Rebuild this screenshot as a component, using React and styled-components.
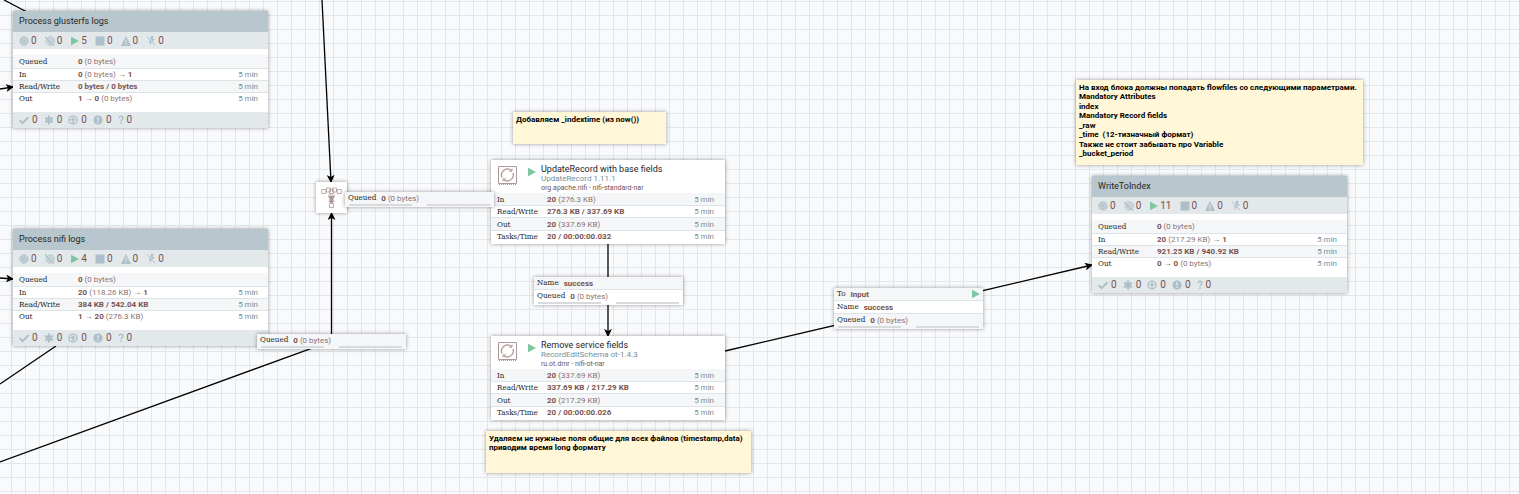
import React from 'react';
import styled, { createGlobalStyle } from 'styled-components';

const Global = createGlobalStyle`
  * { box-sizing: border-box; }
  html, body, #root { height: 100%; }
  body { margin: 0; font-family: Roboto, sans-serif; }
`;

const Canvas = styled.main`
  position: relative;
  min-height: 100%;
  overflow: hidden;
  background-color: #f9fafc;
  background-image:
    linear-gradient(to right, #e3e7e9 1px, transparent 1px),
    linear-gradient(to bottom, #e3e7e9 1px, transparent 1px);
  background-size: 14px 14px;
  background-position: 11px 1px;
`;

const Wires = styled.svg`
  position: absolute;
  inset: 0;
  width: 100%;
  height: 100%;
`;

const Node = styled.section`
  position: absolute;
  left: ${(p) => p.$x}px;
  top: ${(p) => p.$y}px;
  width: ${(p) => p.$w}px;
  background: #fff;
  box-shadow: 0 0 4px rgba(0, 0, 0, 0.4);
`;

const GroupTitle = styled.h2`
  margin: 0;
  padding: 0 6px;
  background: #b8c6cd;
  color: #262626;
  font-size: 9px;
  font-weight: 400;
  line-height: 21px;
`;

const Counters = styled.div`
  display: flex;
  align-items: center;
  gap: ${(p) => (p.$footer ? 6 : 8)}px;
  height: ${(p) => (p.$footer ? 16 : 17)}px;
  padding: 0 6px;
  background: #e3e8eb;
`;

const Counter = styled.span`
  display: flex;
  align-items: center;
  gap: ${(p) => (p.$footer ? 3 : 2)}px;
  color: #775351;
  font-size: 10px;
  line-height: 16px;
`;

const Stats = styled.table`
  width: 100%;
  border-collapse: collapse;
  table-layout: fixed;
  margin: ${(p) => (p.$group ? '6px 0 7px' : '0 0 1px')};
`;

const StatRow = styled.tr`
  height: 12px;
  background: ${(p) => (p.$shade ? '#f4f6f7' : '#fff')};
  box-shadow: inset 0 -1px #dde4e8;
  &:first-child { height: ${(p) => (p.$group ? 14 : 13)}px; }
  &:nth-child(3) { height: ${(p) => (p.$group ? 12 : 13)}px; }
  &:last-child { box-shadow: none; }
`;

const Label = styled.th`
  width: ${(p) => p.$w}px;
  padding: 0 0 0 6px;
  color: #262626;
  font: 400 8px/12px "DejaVu Serif Condensed", "DejaVu Serif", serif;
  text-align: left;
  white-space: nowrap;
`;

const Value = styled.td`
  padding: 0;
  color: #775351;
  font-size: 8px;
  line-height: 12px;
  white-space: nowrap;
`;

const Muted = styled.span`
  color: #8f716f;
`;

const Period = styled.td`
  width: 40px;
  padding: 0 ${(p) => (p.$group ? 10 : 11)}px 0 0;
  color: #728e9b;
  font-size: 8px;
  line-height: 12px;
  text-align: right;
`;

const Head = styled.header`
  display: flex;
  height: 33px;
  padding: 5px 7px 0;
`;

const RunIcon = styled.svg`
  width: 10px;
  height: 10px;
  margin: 2px 4px 0 10px;
`;

const Titles = styled.div`
  display: flex;
  flex-direction: column;
  white-space: nowrap;
`;

const Name = styled.h2`
  margin: 0;
  color: #262626;
  font-size: 9px;
  font-weight: 400;
  line-height: 9px;
`;

const Type = styled.span`
  color: #728e9b;
  font-size: 8px;
  line-height: 10px;
`;

const Bundle = styled.span`
  color: #775351;
  font-size: 7px;
  line-height: 9px;
`;

const LinkRow = styled.div`
  display: flex;
  align-items: center;
  gap: 5px;
  height: ${(p) => (p.$last ? 12 : 13)}px;
  padding: 0 3px;
  background: ${(p) => (p.$shade ? '#f4f6f7' : '#fff')};
  border-bottom: ${(p) => (p.$last ? 0 : 1)}px solid #dde4e8;
  color: #775351;
  font-size: 8px;
  white-space: nowrap;
  svg { margin-left: auto; }
`;

const LinkLabel = styled.span`
  color: #262626;
  font: 400 8px/12px "DejaVu Serif Condensed", "DejaVu Serif", serif;
`;

const Gauges = styled.div`
  display: grid;
  grid-template-columns: 1fr 1fr;
  gap: 15px;
  padding: 0 4px 1px;
  background: ${(p) => (p.$shade ? '#f4f6f7' : '#fff')};
`;

const Gauge = styled.span`
  height: 2px;
  background: #d8dadb;
`;

const Funnel = styled(Node)`
  display: grid;
  place-items: center;
  height: 31px;
`;

const Note = styled.div`
  position: absolute;
  left: ${(p) => p.$x}px;
  top: ${(p) => p.$y}px;
  width: ${(p) => p.$w}px;
  min-height: ${(p) => p.$h}px;
  padding: 3px;
  background: #fff7d7;
  box-shadow: 0 0 4px rgba(0, 0, 0, 0.4);
`;

const NoteLine = styled.p`
  margin: 0;
  color: #000;
  font-size: 8px;
  font-weight: 700;
  line-height: 9px;
  white-space: pre;
  &:nth-child(even) { line-height: 10px; }
`;

const C = '#adbfc8';

const ICONS = {
  transmitting: (
    <g fill="none" stroke={C}>
      <circle cx="5" cy="5" r="4.200" fill="#ccd7dc" strokeWidth=".9" />
      <circle cx="5" cy="5" r="2.600" strokeWidth=".8" />
      <circle cx="5" cy="5" r="1.300" fill={C} stroke="none" />
    </g>
  ),
  notTransmitting: (
    <g fill="none" stroke={C}>
      <circle cx="5.300" cy="5" r="4.200" fill="#d3dce0" strokeWidth=".8" />
      <circle cx="5.300" cy="5" r="2.300" strokeWidth=".8" />
      <path d="M1.100.2l8.700 8.700" stroke="#e3e8eb" />
      <path d="M.4.7l8.800 8.800" strokeWidth="1.200" />
    </g>
  ),
  running: <path d="M1 .8l8 4.200-8 4.200z" fill="#7dc7a0" />,
  stopped: <path d="M.5.5h9v9h-9z" fill={C} />,
  invalid: <path fillRule="evenodd" d="M5 0l5 10H0zM4.300 3.500l.2 3.200h1l.2-3.200zM4.400 7.400v1.300h1.200V7.400z" fill={C} />,
  disabled: (
    <g fill="none" stroke={C}>
      <path d="M.8.5l8.400 8.700" />
      <path d="M5.200 0h2.600L6.600 3h2.200L6.900 5.400 4.200 2.600zM3.700 4l2 2L3.600 10l.7-3.700H2.700z" fill={C} stroke="none" />
    </g>
  ),
  check: <path d="M.7 5.300l3 2.900L9.400 2.200" fill="none" stroke={C} strokeWidth="2" />,
  asterisk: <path d="M5 .6v8.800M1.200 2.800l7.600 4.400M8.800 2.800L1.200 7.200" stroke={C} strokeWidth="2.200" />,
  stale: (
    <g fill="none" stroke={C}>
      <circle cx="5" cy="5" r="3.900" strokeWidth="1.400" />
      <path d="M5 7.800V4M3 5.200l2-2 2 2" strokeWidth="1.500" />
    </g>
  ),
  alert: <path fillRule="evenodd" d="M5 .4a4.600 4.600 0 100 9.200 4.600 4.600 0 000-9.200zM4.200 2.200h1.600l-.3 3.700h-1zM4.300 6.700h1.400v1.300H4.300z" fill={C} />,
  question: (
    <g fill="none" stroke={C} strokeWidth="1.500">
      <path d="M1 3.300C1.200.7 5 .8 5 3c0 1.500-2 1.600-2 3.400M3 7.500v1.500" />
    </g>
  ),
};

const ICON_WIDTHS = { question: 6, running: 9 };

const Icon = ({ name }) => {
  const width = ICON_WIDTHS[name] || 10;
  return (
    <svg width={width} height="10" viewBox={`0 0 ${width} 10`} aria-hidden="true">
      {ICONS[name]}
    </svg>
  );
};

const Rows = ({ rows, group, labelWidth }) => (
  <Stats $group={group}>
    <tbody>
      {rows.map(([label, strong, rest, strong2, period = '5 min'], i) => (
        <StatRow key={label} $shade={i % 2 === 0} $group={group}>
          <Label scope="row" $w={labelWidth}>{label}</Label>
          <Value><b>{strong}</b>{rest && <Muted> {rest}</Muted>}{strong2 && <b> {strong2}</b>}</Value>
          <Period $group={group}>{period}</Period>
        </StatRow>
      ))}
    </tbody>
  </Stats>
);

const Group = ({ x, y, title, running, rows }) => (
  <Node $x={x} $y={y} $w={255}>
    <GroupTitle>{title}</GroupTitle>
    <Counters>
      {['transmitting', 'notTransmitting', 'running', 'stopped', 'invalid', 'disabled'].map((n) => (
        <Counter key={n}><Icon name={n} />{n === 'running' ? running : 0}</Counter>
      ))}
    </Counters>
    <Rows rows={rows} group labelWidth={65} />
    <Counters $footer>
      {['check', 'asterisk', 'stale', 'alert', 'question'].map((n) => (
        <Counter key={n} $footer><Icon name={n} />0</Counter>
      ))}
    </Counters>
  </Node>
);

const Processor = ({ x, y, name, type, bundle, rows }) => (
  <Node $x={x} $y={y} $w={234}>
    <Head>
      <svg width="19" height="20" viewBox="0 0 19 20" fill="none" stroke="#ad9897" aria-hidden="true">
        <path d="M.5 1.500h18v17H.5z" />
        <path d="M1 19.500h18" strokeDasharray="1 1" />
        <path d="M4 12.500A6 6 0 0113.500 5.600M15 8a6 6 0 01-9.500 6.500" strokeWidth="1.300" />
        <path d="M11.200 6.200h2.800V3.600M7.800 13.800H5v2.600" />
      </svg>
      <RunIcon viewBox="0 0 10 10" aria-hidden="true">{ICONS.running}</RunIcon>
      <Titles>
        <Name>{name}</Name>
        <Type>{type}</Type>
        <Bundle>{bundle}</Bundle>
      </Titles>
    </Head>
    <Rows rows={rows} labelWidth={56} />
  </Node>
);

const Connection = ({ x, y, rows = [], shade }) => (
  <Node $x={x} $y={y} $w={149}>
    {rows.map(([label, value, run], i) => (
      <LinkRow key={label} $shade={i % 2 === 0}>
        <LinkLabel>{label}</LinkLabel><b>{value}</b>
        {run && <Icon name="running" />}
      </LinkRow>
    ))}
    <LinkRow $shade={shade} $last>
      <LinkLabel>Queued</LinkLabel>
      <span><b>0</b><Muted> (0 bytes)</Muted></span>
    </LinkRow>
    <Gauges $shade={shade}><Gauge /><Gauge /></Gauges>
  </Node>
);

const Comment = ({ x, y, w, h, lines }) => (
  <Note $x={x} $y={y} $w={w} $h={h}>
    {lines.map((line) => <NoteLine key={line}>{line}</NoteLine>)}
  </Note>
);

export default function App() {
  return (
    <>
      <Global />
      <Canvas>
        <Wires aria-hidden="true">
          <defs>
            <marker id="arrow" viewBox="0 0 8 8" refX="7" refY="4" markerWidth="8" markerHeight="8" markerUnits="userSpaceOnUse" orient="auto">
              <path d="M0 0l8 4-8 4 2-4z" />
            </marker>
          </defs>
          <g fill="none" stroke="#000" strokeWidth="1.300">
            <path d="M4 0l23 12" />
            <path d="M0 89l13-2" markerEnd="url(#arrow)" />
            <path d="M0 278l13 1" markerEnd="url(#arrow)" />
            <path d="M322 0l9 182" markerEnd="url(#arrow)" />
            <path d="M0 462l331.500-121V213" markerEnd="url(#arrow)" />
            <path d="M0 384l56-38" />
            <path d="M608 240v96" markerEnd="url(#arrow)" />
            <path d="M725 351l184-43 183-43" markerEnd="url(#arrow)" />
          </g>
        </Wires>

        <Group x={13} y={11} title="Process glusterfs logs" running={5} rows={[
          ['Queued', '0', '(0 bytes)', '', ''],
          ['In', '0', '(0 bytes)', '→ 1'],
          ['Read/Write', '0 bytes / 0 bytes'],
          ['Out', '1 → 0', '(0 bytes)'],
        ]} />
        <Group x={13} y={229} title="Process nifi logs" running={4} rows={[
          ['Queued', '0', '(0 bytes)', '', ''],
          ['In', '20', '(118.26 KB)', '→ 1'],
          ['Read/Write', '384 KB / 542.04 KB'],
          ['Out', '1 → 20', '(276.3 KB)'],
        ]} />
        <Group x={1092} y={176} title="WriteToIndex" running={11} rows={[
          ['Queued', '0', '(0 bytes)', '', ''],
          ['In', '20', '(217.29 KB)', '→ 1'],
          ['Read/Write', '921.25 KB / 940.92 KB'],
          ['Out', '0 → 0', '(0 bytes)'],
        ]} />

        <Funnel $x={316} $y={182} $w={31}>
          <svg width="21" height="21" viewBox="0 0 21 21" fill="none" stroke="#ad9897" strokeWidth=".8" aria-hidden="true">
            <path d="M.8 2.500h4v4h-4zM5.500 1h4v4h-4zM11.500 1h4v4h-4zM16.200 2.500h4v4h-4zM8.500 2.500h4v4h-4zM8.500 16.500h4v4h-4z" />
            <path d="M7 8h7" />
            <path d="M7 9h7l-1.500 2.500V14H14l-3.500 2.500L7 14h1.500v-2.500z" fill="#ad9897" stroke="none" />
          </svg>
        </Funnel>

        <Processor x={491} y={160} name="UpdateRecord with base fields" type="UpdateRecord 1.11.1" bundle="org.apache.nifi - nifi-standard-nar" rows={[
          ['In', '20', '(276.3 KB)'],
          ['Read/Write', '276.3 KB / 337.69 KB'],
          ['Out', '20', '(337.69 KB)'],
          ['Tasks/Time', '20 / 00:00:00.032'],
        ]} />
        <Processor x={491} y={336} name="Remove service fields" type="RecordEditSchema ot-1.4.3" bundle="ru.ot.dmr - nifi-ot-nar" rows={[
          ['In', '20', '(337.69 KB)'],
          ['Read/Write', '337.69 KB / 217.29 KB'],
          ['Out', '20', '(217.29 KB)'],
          ['Tasks/Time', '20 / 00:00:00.026'],
        ]} />

        <Connection x={345} y={192} shade />
        <Connection x={257} y={334} shade />
        <Connection x={534} y={277} rows={[['Name', 'success']]} />
        <Connection x={834} y={288} shade rows={[['To', 'Input', true], ['Name', 'success']]} />

        <Comment x={513} y={112} w={153} h={32} lines={['Добавляем _indextime (из now())']} />
        <Comment x={486} y={431} w={265} h={42} lines={[
          'Удаляем не нужные поля общие для всех файлов (timestamp,data)',
          'приводим время long формату',
        ]} />
        <Comment x={1076} y={80} w={287} h={85} lines={[
          'На вход блока должны попадать flowfiles со следующими параметрами.',
          'Mandatory Attributes',
          'index',
          'Mandatory Record fields',
          '_raw',
          '_time  (12-тизначный формат)',
          'Также не стоит забывать про Variable',
          '_bucket_period',
        ]} />
      </Canvas>
    </>
  );
}
